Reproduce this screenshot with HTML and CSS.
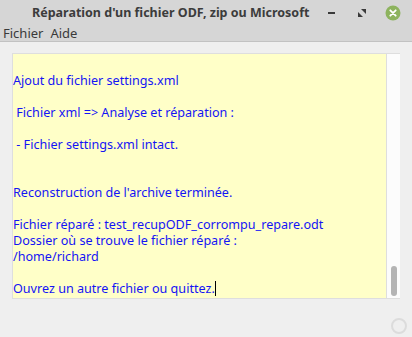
FILE: index.html
```html
<!DOCTYPE html>
<html lang="fr">
<head>
    <meta charset="UTF-8">
    <title>Réparation d'un fichier ODF, zip ou Microsoft</title>
    <link rel="stylesheet" href="styles.css">
</head>
<body>

    <div class="window">
        <div class="titlebar">
            <span class="title">Réparation d'un fichier ODF, zip ou Microsoft</span>
            <div class="controls">
                <span class="btn-min"></span>
                <svg class="btn-max" width="10" height="10" viewBox="0 0 10 10">
                    <path d="M4 1 L9 1 L9 6 Z" fill="#3a3a3a"/>
                    <path d="M1 4 L1 9 L6 9 Z" fill="#3a3a3a"/>
                </svg>
                <svg class="btn-close" width="16" height="16" viewBox="0 0 16 16">
                    <circle cx="8" cy="8" r="7.5" fill="#8db35e"/>
                    <path d="M5.3 5.3 L10.7 10.7 M10.7 5.3 L5.3 10.7" stroke="#fff" stroke-width="1.8" stroke-linecap="round"/>
                </svg>
            </div>
        </div>
        <div class="menubar">
            <span>Fichier</span>
            <span>Aide</span>
        </div>

        <div class="content">
            <div class="textbox">
                <div class="text">
                    <p>&nbsp;</p>
                    <p>Ajout du fichier settings.xml</p>
                    <p>&nbsp;</p>
                    <p>&nbsp;Fichier xml =&gt; Analyse et réparation :</p>
                    <p>&nbsp;</p>
                    <p>&nbsp;- Fichier settings.xml intact.</p>
                    <p>&nbsp;</p>
                    <p>&nbsp;</p>
                    <p>Reconstruction de l'archive terminée.</p>
                    <p>&nbsp;</p>
                    <p>Fichier réparé : test_recupODF_corrompu_repare.odt</p>
                    <p>Dossier où se trouve le fichier réparé :</p>
                    <p>/home/richard</p>
                    <p>&nbsp;</p>
                    <p>Ouvrez un autre fichier ou quittez.<span class="caret"></span></p>
                </div>
                <div class="scrollbar">
                    <div class="thumb"></div>
                </div>
            </div>
            <div class="footer">
                <span class="grip"></span>
            </div>
        </div>
    </div>

</body>
</html>
```

FILE: styles.css
```css
body {
    margin: 0;
    width: 412px;
    height: 337px;
    overflow: hidden;
    background: #efefef;
    font-family: 'Noto Sans', sans-serif;
}

.window {
    display: flex;
    flex-direction: column;
    height: 337px;
}

.titlebar {
    height: 25px;
    background: #d6d6d6;
    display: flex;
    align-items: center;
}

.title {
    flex: 1;
    min-width: 0;
    padding-left: 32px;
    font-size: 12.5px;
    font-weight: bold;
    color: #3c3c3c;
    white-space: nowrap;
    overflow: hidden;
}

.controls {
    flex-shrink: 0;
    display: flex;
    align-items: center;
    padding-right: 11px;
}

.btn-min {
    width: 7px;
    height: 2px;
    background: #3a3a3a;
    margin-right: 22px;
}

.btn-max {
    margin-right: 18px;
}

.menubar {
    height: 16px;
    background: #d6d6d6;
    border-bottom: 1px solid #c2c2c2;
    display: flex;
    gap: 7px;
    padding-left: 3px;
    font-size: 13px;
    line-height: 16px;
    color: #3a3a3a;
}

.content {
    flex: 1;
    display: flex;
    flex-direction: column;
    padding: 11px 12px 0 12px;
}

.textbox {
    display: flex;
    height: 244px;
    border: 1px solid #dedede;
    border-right: none;
}

.text {
    flex: 1;
    background: #ffffc8;
    border-right: 1px solid #dedede;
    padding-top: 3px;
    color: #1414f5;
    font-size: 12.6px;
    overflow: hidden;
}

.text p {
    margin: 0;
    height: 16px;
    line-height: 16px;
    white-space: nowrap;
}

.caret {
    display: inline-block;
    width: 1px;
    height: 15px;
    background: #000;
    vertical-align: -3px;
}

.scrollbar {
    width: 13px;
    background: #fcfcfc;
    display: flex;
    flex-direction: column;
    justify-content: flex-end;
    align-items: center;
    padding-bottom: 2px;
}

.thumb {
    width: 6px;
    height: 30px;
    background: #b4b4b4;
    border-radius: 3px;
}

.footer {
    flex: 1;
    display: flex;
    justify-content: flex-end;
    align-items: center;
}

.grip {
    width: 12px;
    height: 12px;
    border: 2px solid #dcdcdc;
    border-radius: 50%;
    margin-right: -7px;
    margin-top: 16px;
}
```
